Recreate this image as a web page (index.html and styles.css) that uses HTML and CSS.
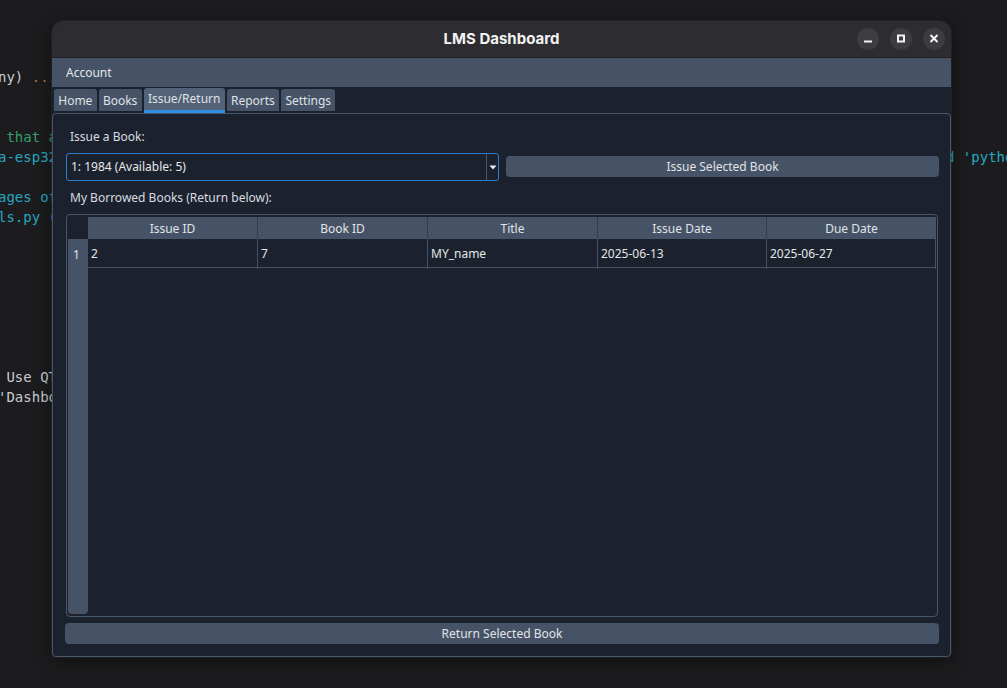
FILE: index.html
```html
<!DOCTYPE html>
<html>
<head>
<meta charset="utf-8">
<title>LMS Dashboard</title>
<link rel="stylesheet" href="styles.css">
</head>
<body>
<div class="desktop">
  <div class="code">
    <div class="ln"><span class="g">ny)</span> <span class="o">..........</span></div>
    <div class="ln"></div>
    <div class="ln"></div>
    <div class="ln gr"> that are used by the app</div>
    <div class="ln c">a-esp32<span class="pad"></span>d 'python'</div>
    <div class="ln"></div>
    <div class="ln c">ages of the</div>
    <div class="ln c">ls.py (models)</div>
    <div class="ln"></div>
    <div class="ln"></div>
    <div class="ln"></div>
    <div class="ln"></div>
    <div class="ln"></div>
    <div class="ln"></div>
    <div class="ln"></div>
    <div class="ln g"> Use QT widgets</div>
    <div class="ln g">'Dashboard'</div>
  </div>

  <div class="window">
    <div class="titlebar">
      <div></div>
      <div class="title">LMS Dashboard</div>
      <div class="controls">
        <span class="ctl"><svg width="10" height="10" viewBox="0 0 10 10"><rect x="1" y="6.5" width="8" height="2" fill="#f2f2f2"/></svg></span>
        <span class="ctl"><svg width="10" height="10" viewBox="0 0 10 10"><rect x="2" y="1.5" width="6" height="6" fill="none" stroke="#f2f2f2" stroke-width="2"/></svg></span>
        <span class="ctl"><svg width="10" height="10" viewBox="0 0 10 10"><path d="M1.5 1L8.5 8M8.5 1L1.5 8" stroke="#f2f2f2" stroke-width="2"/></svg></span>
      </div>
    </div>
    <div class="menubar"><span class="menu">Account</span></div>
    <div class="tabbar">
      <div class="tab">Home</div>
      <div class="tab">Books</div>
      <div class="tab active">Issue/Return</div>
      <div class="tab">Reports</div>
      <div class="tab">Settings</div>
    </div>
    <div class="pane">
      <div class="label">Issue a Book:</div>
      <div class="issue-row">
        <div class="combo">
          <span class="combo-text">1: 1984 (Available: 5)</span>
          <span class="combo-arrow"><svg width="8" height="5" viewBox="0 0 8 5"><path d="M0.5 0.5H7.5L4 4.5Z" fill="#eef0f2"/></svg></span>
        </div>
        <button class="btn issue">Issue Selected Book</button>
      </div>
      <div class="label">My Borrowed Books (Return below):</div>
      <div class="table">
        <div class="corner"></div>
        <div class="hheader">
          <div class="hcell">Issue ID</div>
          <div class="hcell">Book ID</div>
          <div class="hcell">Title</div>
          <div class="hcell">Issue Date</div>
          <div class="hcell">Due Date</div>
        </div>
        <div class="vheader"><div class="vcell">1</div></div>
        <div class="tbody">
          <div class="row">
            <div class="cell">2</div>
            <div class="cell">7</div>
            <div class="cell">MY_name</div>
            <div class="cell">2025-06-13</div>
            <div class="cell">2025-06-27</div>
          </div>
        </div>
      </div>
      <button class="btn ret">Return Selected Book</button>
    </div>
  </div>
</div>
</body>
</html>
```

FILE: styles.css
```css
* { box-sizing: border-box; }

html, body {
  margin: 0;
  padding: 0;
  background: #1c1c1e;
}

.desktop {
  position: relative;
  width: 1007px;
  height: 688px;
  overflow: hidden;
  background: #1c1c1e;
}

/* terminal/editor text behind the window */
.code {
  position: absolute;
  top: 67px;
  left: -2px;
  font-family: "DejaVu Sans Mono", "Liberation Mono", monospace;
  font-size: 14px;
  line-height: 20px;
  color: #c6cad0;
}
.ln { height: 20px; white-space: pre; }
.g { color: #c6cad0; }
.o { color: #a8743c; }
.gr { color: #34a06a; }
.c { color: #27a6c2; }
.pad { display: inline-block; width: 889px; }

/* application window */
.window {
  position: absolute;
  left: 52px;
  top: 21px;
  width: 899px;
  height: 636px;
  display: flex;
  flex-direction: column;
  border-radius: 12px 12px 4px 4px;
  background: #1b222d;
  box-shadow: 0 0 0 1px rgba(255,255,255,0.05), 0 4px 18px rgba(0,0,0,0.45);
  font-family: "Noto Sans", "DejaVu Sans", sans-serif;
  font-size: 12px;
  color: #e1e4e8;
}

.titlebar {
  height: 37px;
  flex: none;
  display: grid;
  grid-template-columns: 1fr auto 1fr;
  align-items: center;
  background: #2d2d31;
  border-radius: 12px 12px 0 0;
  border-bottom: 1px solid #212124;
}
.title {
  font-family: Inter, "Noto Sans", sans-serif;
  font-weight: 700;
  font-size: 15px;
  color: #f3f3f3;
  padding-bottom: 1px;
}
.controls {
  justify-self: end;
  display: flex;
  gap: 11px;
  padding-right: 6px;
  padding-bottom: 1px;
}
.ctl {
  width: 22px;
  height: 22px;
  border-radius: 50%;
  background: #3c3c41;
  display: flex;
  align-items: center;
  justify-content: center;
}

.menubar {
  height: 29px;
  flex: none;
  background: #465366;
  display: flex;
  align-items: center;
  padding-left: 14px;
  padding-bottom: 1px;
}
.menu { color: #e4e7ea; }

.tabbar {
  height: 26px;
  flex: none;
  display: flex;
  align-items: flex-start;
  gap: 2px;
  padding: 1px 0 0 2px;
  background: #1b222d;
}
.tab {
  margin-top: 1px;
  height: 22px;
  padding: 0 4.25px;
  line-height: 23px;
  background: #465366;
  border-radius: 3px 3px 0 0;
  color: #dfe2e6;
  white-space: nowrap;
}
.tab.active {
  margin-top: 0;
  height: 25px;
  line-height: 22px;
  background: #536278;
  border-bottom: 3px solid #2c8fe3;
}

.pane {
  flex: 1;
  display: flex;
  flex-direction: column;
  border: 1px solid #4a5669;
  border-radius: 4px;
  background: #1b222d;
  padding: 13px 11px 12px 12px;
}

.label {
  height: 18px;
  line-height: 20px;
  padding-left: 5px;
  color: #d9dce0;
  flex: none;
}

.issue-row {
  margin-top: 8px;
  height: 28px;
  flex: none;
  display: flex;
  align-items: center;
  gap: 7px;
  margin-bottom: 7px;
}
.combo {
  width: 433px;
  height: 28px;
  margin-left: 1px;
  flex: none;
  display: flex;
  align-items: stretch;
  border: 1px solid #2d7dcf;
  border-radius: 3px;
  background: #1b222d;
}
.combo-text {
  flex: 1;
  display: flex;
  align-items: center;
  padding-left: 4px;
  padding-bottom: 1px;
  color: #e6e8eb;
}
.combo-arrow {
  width: 12px;
  border-left: 1px solid #4a5669;
  display: flex;
  align-items: center;
  justify-content: center;
}

.btn {
  font-family: "Noto Sans", "DejaVu Sans", sans-serif;
  font-size: 12px;
  color: #e1e4e8;
  background: #465366;
  border: none;
  border-radius: 4px;
  height: 21px;
  padding: 0;
  line-height: 21px;
}
.btn.issue { flex: 1; margin-bottom: 1px; }
.btn.ret { flex: none; margin-top: 6px; width: 100%; }

.table {
  margin-top: 8px;
  margin-left: 1px;
  margin-right: 1px;
  flex: 1;
  display: grid;
  grid-template-columns: 20px 1fr;
  grid-template-rows: 22px 1fr;
  border: 1px solid #4a5669;
  border-radius: 4px;
  padding: 2px 1px 2px 1px;
}
.corner { background: #1b222d; }
.hheader {
  display: grid;
  grid-template-columns: 170px 170px 170px 169px 1fr;
  background: #465366;
}
.hcell {
  text-align: center;
  line-height: 24px;
  color: #e1e4e8;
  border-right: 1px solid #343f4e;
}
.hcell:last-child { border-right: none; }

.vheader {
  background: #465366;
  border-radius: 0 0 4px 4px;
}
.vcell {
  height: 29px;
  line-height: 32px;
  text-align: center;
  padding-right: 3px;
  color: #e1e4e8;
}

.tbody { background: #1b222d; }
.row {
  display: grid;
  grid-template-columns: 170px 170px 170px 169px 1fr;
  height: 29px;
  border-bottom: 1px solid #46526a;
}
.cell {
  padding-left: 3px;
  line-height: 30px;
  color: #e4e7ea;
  border-right: 1px solid #46526a;
}
```
